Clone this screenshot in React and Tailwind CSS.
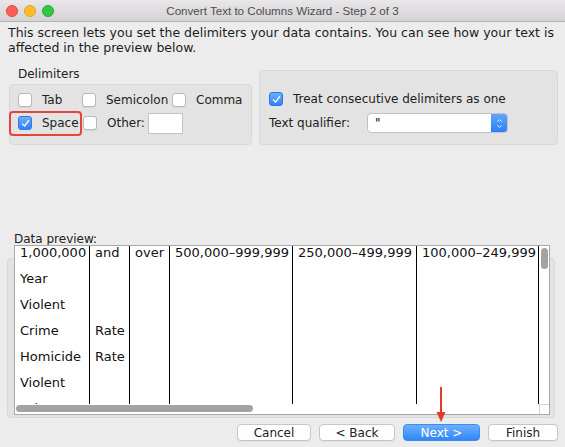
import { ChevronUp, ChevronDown } from "lucide-react";

const font = { fontFamily: '"DejaVu Sans", "Liberation Sans", sans-serif' };

const columns = [
  { w: "w-[75px]", cells: ["1,000,000", "Year", "Violent", "Crime", "Homicide", "Violent", "Crime"] },
  { w: "w-[40px]", cells: ["and", "", "", "Rate", "Rate", "", "Rate"] },
  { w: "w-[40px]", cells: ["over", "", "", "", "", "", ""] },
  { w: "w-[123px]", cells: ["500,000–999,999", "", "", "", "", "", ""] },
  { w: "w-[124px]", cells: ["250,000–499,999", "", "", "", "", "", ""] },
  { w: "w-[122px]", cells: ["100,000–249,999", "", "", "", "", "", ""] },
];

function Check({ checked }) {
  if (checked) {
    return (
      <span className="w-[14px] h-[14px] shrink-0 rounded-[3px] bg-linear-to-b from-[#6aaefc] to-[#2f82f6] border border-[#2c78e6] flex items-center justify-center">
        <svg viewBox="0 0 10 10" className="w-[9px] h-[9px]">
          <path d="M1.6 5.4 L4 7.9 L8.4 1.8" stroke="white" strokeWidth="1.5" fill="none" strokeLinecap="round" strokeLinejoin="round" />
        </svg>
      </span>
    );
  }
  return <span className="w-[14px] h-[14px] shrink-0 rounded-[3px] bg-white border border-[#b8b8b8] shadow-[0_1px_1px_rgba(0,0,0,0.06)]" />;
}

function Option({ checked, label, className }) {
  return (
    <div className={"flex items-center " + className}>
      <Check checked={checked} />
      <span className="ml-[10px] text-[12px] text-[#222]">{label}</span>
    </div>
  );
}

function Button({ children, primary, w }) {
  return (
    <button
      className={
        "h-[17px] rounded-[4px] text-[12px] leading-none flex items-center justify-center " +
        w +
        (primary
          ? " bg-linear-to-b from-[#6ab0fd] to-[#2f86f7] border border-[#3a8cf2] text-white"
          : " bg-white border border-[#c6c6c6] text-[#222] shadow-[0_1px_0_rgba(0,0,0,0.04)]")
      }
    >
      {children}
    </button>
  );
}

export default function App() {
  return (
    <div className="w-[565px] h-[447px] bg-[#ececec] relative overflow-hidden" style={font}>
      {/* Title bar */}
      <div className="h-[22px] bg-linear-to-b from-[#e9e7e9] to-[#d4d3d4] border-b border-[#b3b3b3] flex items-center">
        <div className="flex items-center gap-[6px] pl-[6px]">
          <span className="w-[12px] h-[12px] rounded-full bg-[#fc5f57] border border-[#df4744]" />
          <span className="w-[12px] h-[12px] rounded-full bg-[#fdbc2e] border border-[#dea123]" />
          <span className="w-[12px] h-[12px] rounded-full bg-[#33c748] border border-[#27aa35]" />
        </div>
        <div
          className="flex-1 text-center text-[#4d4d4d] pr-[54px]"
          style={{ fontFamily: '"Liberation Sans", Arial, sans-serif', fontSize: "11.6px" }}
        >
          Convert Text to Columns Wizard - Step 2 of 3
        </div>
      </div>

      {/* Description */}
      <p className="pl-[8px] pr-[2px] pt-[3px] text-[12.5px] leading-[15px] text-[#1c1c1c]">
        This screen lets you set the delimiters your data contains. You can see how your text is affected in the preview below.
      </p>

      {/* Options */}
      <div className="flex pl-[9px] mt-[12px]">
        <div className="w-[243px]">
          <div className="pl-[9px] h-[17px] text-[12px] text-[#222] leading-[15px]">Delimiters</div>
          <div className="h-[61px] rounded-[4px] bg-[#e3e3e3] border border-[#d8d8d8] pl-[8px] pt-[8px] relative">
            <div className="flex h-[14px]">
              <Option label="Tab" className="w-[64px]" />
              <Option label="Semicolon" className="w-[90px]" />
              <Option label="Comma" />
            </div>
            <div className="flex h-[14px] mt-[9px]">
              <Option checked label="Space" className="w-[65px]" />
              <div className="flex items-center">
                <Check />
                <span className="ml-[10px] text-[12px] text-[#222]">Other:</span>
                <span className="ml-[3px] w-[35px] h-[21px] bg-white border border-[#c3c3c3]" />
              </div>
            </div>
            {/* red highlight */}
            <div className="absolute left-[-1px] top-[26px] w-[73px] h-[25px] rounded-[4px] border-2 border-[#e5443b]" />
          </div>
        </div>
        <div className="ml-[7px] mt-[3px] w-[299px] h-[75px] rounded-[4px] bg-[#e3e3e3] border border-[#d8d8d8] pl-[9px] pt-[19px]">
          <Option checked label="Treat consecutive delimiters as one" />
          <div className="flex items-center mt-[5px]">
            <span className="text-[12px] text-[#222] w-[98px]">Text qualifier:</span>
            <div className="w-[141px] h-[20px] rounded-[4px] bg-white border border-[#c2c2c2] flex overflow-hidden">
              <span className="flex-1 pl-[7px] text-[12px] leading-[18px] text-black">"</span>
              <span className="w-[16px] bg-linear-to-b from-[#5fa7fc] to-[#2b7ff5] flex flex-col items-center justify-center">
                <ChevronUp className="w-[9px] h-[7px] text-white -mb-[1px]" strokeWidth={3} />
                <ChevronDown className="w-[9px] h-[7px] text-white" strokeWidth={3} />
              </span>
            </div>
          </div>
        </div>
      </div>

      {/* Data preview */}
      <div className="mt-[87px] pl-[14px] h-[26px] text-[12px] leading-[15px] text-[#222]">Data preview:</div>
      <div className="ml-[7px] mr-[10px] h-[160px] rounded-[4px] bg-[#e3e3e3] border border-[#d8d8d8]">
        <div className="relative z-10 -mt-[14px] ml-[6px] w-[536px] h-[170px] bg-white border border-[#a9a9a9] flex flex-col">
          <div className="flex h-[158px]">
            <div className="flex overflow-hidden">
              {columns.map((col, i) => (
                <div key={i} className={"border-r border-black h-full overflow-hidden " + col.w}>
                  <div className="-mt-[6px]">
                    {col.cells.map((c, j) => (
                      <div key={j} className="h-[26px] pl-[5px] flex items-center text-[13px] text-[#111] whitespace-nowrap">
                        {c}
                      </div>
                    ))}
                  </div>
                </div>
              ))}
            </div>
            <div className="w-[10px] pl-[2px] pt-[2px]">
              <div className="w-[7px] h-[21px] rounded-full bg-[#a3a3a3]" />
            </div>
          </div>
          <div className="h-[10px] flex">
            <div className="flex-1 pl-[1px] pt-[1px]">
              <div className="w-[237px] h-[7px] rounded-full bg-[#a3a3a3]" />
            </div>
            <div className="w-[10px] h-[10px] border-l border-t border-[#d4d4d4]" />
          </div>
        </div>
      </div>

      {/* Buttons */}
      <div className="flex justify-end gap-[8px] pr-[7px] mt-[6px]">
        <Button w="w-[74px]">Cancel</Button>
        <Button w="w-[76px]">&lt; Back</Button>
        <Button w="w-[77px]" primary>Next &gt;</Button>
        <Button w="w-[70px]">Finish</Button>
      </div>

      {/* red arrow annotation */}
      <svg className="absolute z-20 left-[435px] top-[387px]" width="12" height="36" viewBox="0 0 12 36">
        <line x1="6" y1="0" x2="6" y2="27" stroke="#e5392f" strokeWidth="2" />
        <polygon points="1.5,25 10.5,25 6,35" fill="#e5392f" />
      </svg>
    </div>
  );
}
